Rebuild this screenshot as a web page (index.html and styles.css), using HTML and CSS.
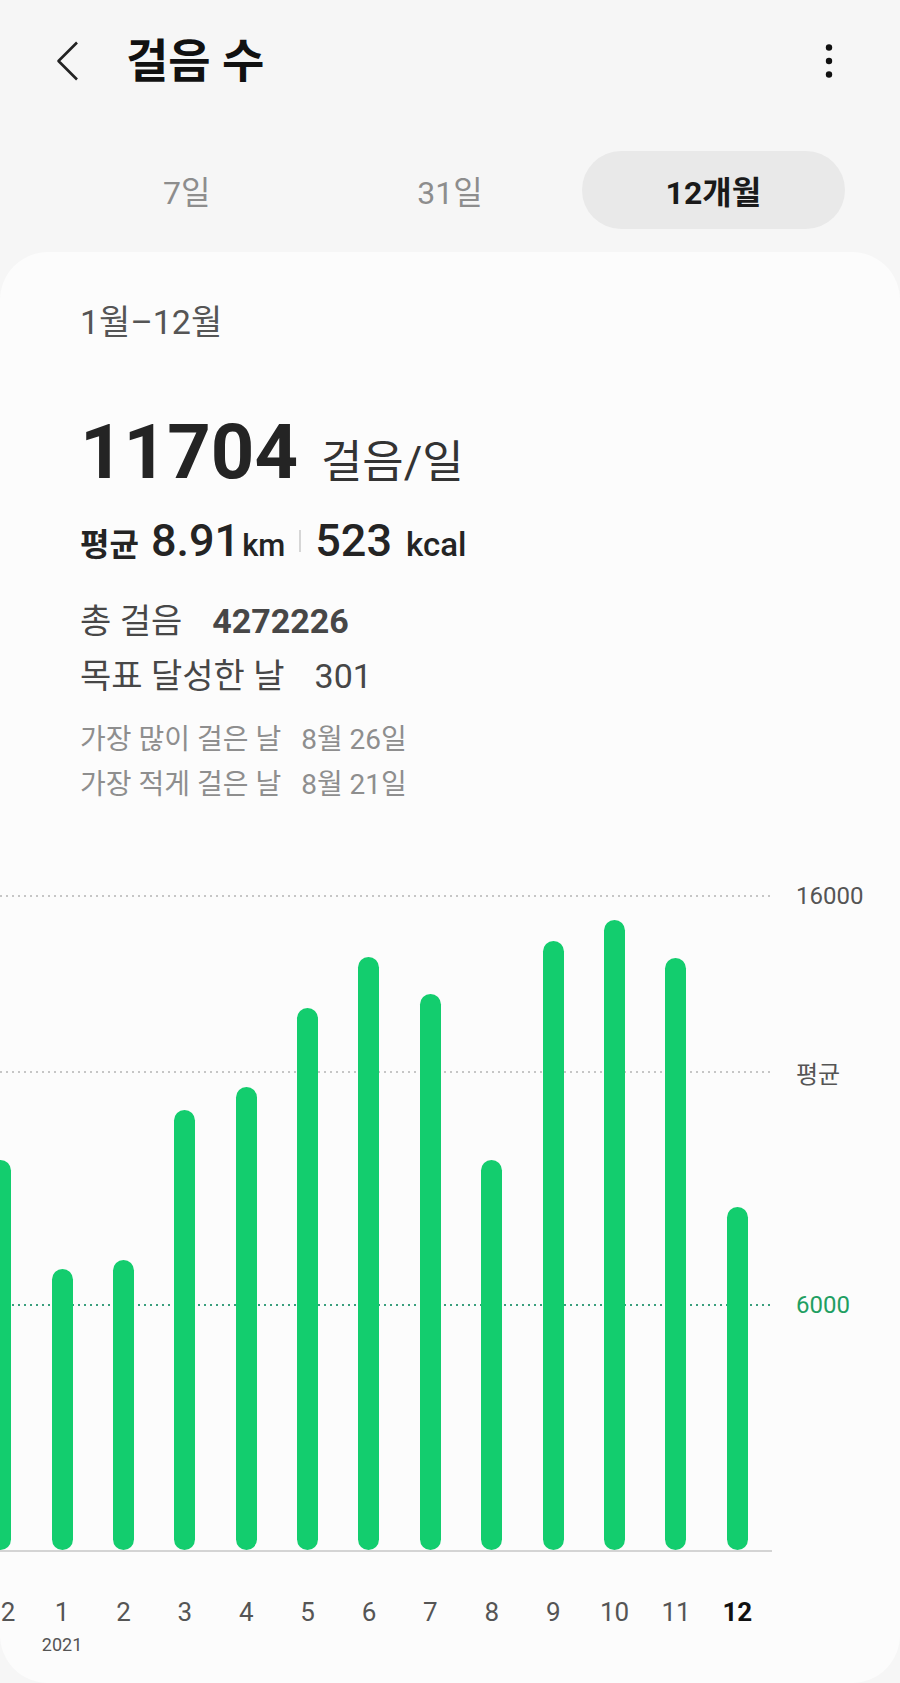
FILE: index.html
```html
<!DOCTYPE html>
<html lang="ko">
	<head>
		<meta charset="UTF-8" />
		<meta name="viewport" content="width=device-width, initial-scale=1.0" />
		<title>걸음 수</title>
		<link rel="stylesheet" href="styles.css">
	</head>
	<body>
		<header class="app-bar">
			<svg class="back-icon" width="28" height="40" viewBox="0 0 28 40">
				<path d="M21 1.5 L2.5 20 L21 38.5" fill="none" stroke="#222" stroke-width="2.6" stroke-linejoin="round" />
			</svg>
			<h1 class="title">걸음 수</h1>
			<svg class="more-icon" width="12" height="40" viewBox="0 0 12 40">
				<circle cx="6" cy="6.5" r="3.2" fill="#111" />
				<circle cx="6" cy="20" r="3.2" fill="#111" />
				<circle cx="6" cy="33.5" r="3.2" fill="#111" />
			</svg>
		</header>

		<nav class="tabs">
			<div class="tab">7일</div>
			<div class="tab">31일</div>
			<div class="tab active">12개월</div>
		</nav>

		<main class="card">
			<div class="summary">
				<div class="range">1월–12월</div>
				<div class="steps">
					<span class="steps-num">11704</span>
					<span class="steps-unit">걸음/일</span>
				</div>
				<div class="stats">
					<span class="stats-label">평균</span>
					<span class="stats-num">8.91</span><span class="stats-unit">km</span>
					<span class="divider"></span>
					<span class="stats-num">523</span>
					<span class="stats-unit kcal">kcal</span>
				</div>
				<div class="totals">
					<div class="total-row">총 걸음<span class="total-value strong">4272226</span></div>
					<div class="total-row">목표 달성한 날<span class="total-value">301</span></div>
				</div>
				<div class="records">
					<div class="record-row">가장 많이 걸은 날<span class="record-date">8월 26일</span></div>
					<div class="record-row">가장 적게 걸은 날<span class="record-date">8월 21일</span></div>
				</div>
			</div>

			<div class="chart">
				<div class="plot">
					<div class="grid grid-max">
						<span class="dots"></span>
						<span class="grid-label">16000</span>
					</div>
					<div class="grid grid-avg">
						<span class="dots"></span>
						<span class="grid-label">평균</span>
					</div>
					<div class="grid grid-goal">
						<span class="dots"></span>
						<span class="grid-label">6000</span>
					</div>

					<div class="bars">
						<div class="bar" style="height: 390px"></div>
						<div class="bar" style="height: 281px"></div>
						<div class="bar" style="height: 290px"></div>
						<div class="bar" style="height: 440px"></div>
						<div class="bar" style="height: 463px"></div>
						<div class="bar" style="height: 542px"></div>
						<div class="bar" style="height: 593px"></div>
						<div class="bar" style="height: 556px"></div>
						<div class="bar" style="height: 390px"></div>
						<div class="bar" style="height: 609px"></div>
						<div class="bar" style="height: 630px"></div>
						<div class="bar" style="height: 592px"></div>
						<div class="bar" style="height: 343px"></div>
					</div>
				</div>

				<div class="months">
					<div class="month">12</div>
					<div class="month">1<span class="year">2021</span></div>
					<div class="month">2</div>
					<div class="month">3</div>
					<div class="month">4</div>
					<div class="month">5</div>
					<div class="month">6</div>
					<div class="month">7</div>
					<div class="month">8</div>
					<div class="month">9</div>
					<div class="month">10</div>
					<div class="month">11</div>
					<div class="month current">12</div>
				</div>
			</div>
		</main>
	</body>
</html>
```

FILE: styles.css
```css
html,
body {
	height: 1683px;
	overflow: hidden;
}
body {
	margin: 0;
	background-color: #f6f6f6;
	font-family: Roboto, 'Noto Sans CJK KR', sans-serif;
	color: #222;
}
.app-bar {
	display: flex;
	align-items: center;
	height: 122px;
	padding: 0 65px 0 56px;
}
.title {
	margin: 0 0 0 42px;
	font-size: 46px;
	line-height: 46px;
	font-weight: 700;
	color: #111;
}
.more-icon {
	margin-left: auto;
}
.tabs {
	display: grid;
	grid-template-columns: repeat(3, 1fr);
	margin: 29px 55px 0;
	height: 78px;
}
.tab {
	display: flex;
	align-items: center;
	justify-content: center;
	font-size: 32px;
	color: #8d8d8d;
}
.tab.active {
	background-color: #e9e9e9;
	border-radius: 39px;
	color: #1a1a1a;
	font-weight: 700;
}
.card {
	display: block;
	margin-top: 23px;
	height: 1431px;
	background: #fcfcfc;
	border-radius: 48px;
	overflow: hidden;
}
.summary {
	padding: 50px 0 0 80px;
}
.range {
	font-size: 34px;
	line-height: 40px;
	color: #555;
}
.steps {
	margin-top: 65px;
	font-size: 76px;
	line-height: 90px;
	color: #242424;
	white-space: nowrap;
}
.steps-num {
	font-weight: 700;
	line-height: 1;
}
.steps-unit {
	margin-left: 4px;
	font-size: 45px;
	line-height: 1;
	color: #333;
}
.stats {
	display: flex;
	align-items: baseline;
	margin-top: 21px;
	font-size: 45px;
	line-height: 50px;
	color: #242424;
}
.stats span {
	line-height: 1;
}
.stats-label {
	margin-right: 12px;
	font-size: 32px;
	font-weight: 700;
}
.stats-num {
	font-weight: 500;
}
.stats-unit {
	margin-left: 2px;
	font-size: 31px;
	font-weight: 500;
}
.stats-unit.kcal {
	margin-left: 14px;
	font-size: 33px;
}
.divider {
	align-self: center;
	width: 2px;
	height: 22px;
	margin: 0 14px;
	background-color: #d6d6d6;
}
.totals {
	margin-top: 31px;
	font-size: 34px;
	line-height: 55px;
	color: #474747;
}
.total-value {
	margin-left: 30px;
}
.total-value.strong {
	font-weight: 700;
}
.records {
	margin-top: 13px;
	font-size: 28px;
	line-height: 45px;
	color: #8e8e8e;
}
.record-date {
	margin-left: 20px;
}
.chart {
	margin-top: 83px;
}
.plot {
	position: relative;
	width: 772px;
	height: 660px;
	border-bottom: 2px solid #d4d4d4;
}
.grid {
	position: absolute;
	left: 0;
	display: flex;
	align-items: center;
	height: 0;
}
.grid-max {
	bottom: 654px;
}
.grid-avg {
	bottom: 478px;
}
.grid-goal {
	bottom: 245px;
}
.dots {
	width: 770px;
	height: 2px;
	background: repeating-linear-gradient(to right, #c6c6c6 0 2px, transparent 2px 6px);
}
.grid-label {
	margin-left: 26px;
	font-size: 24px;
	color: #555;
	white-space: nowrap;
}
.grid-goal .dots {
	background: repeating-linear-gradient(to right, #3a9f7d 0 2px, transparent 2px 6px);
}
.grid-goal .grid-label {
	color: #1f9f62;
}
.bars {
	position: relative;
	display: flex;
	align-items: flex-end;
	height: 100%;
	margin-left: -30px;
}
.bar {
	flex: none;
	width: 21px;
	margin: 0 20.2px;
	border-radius: 11px;
	background-color: #13cd6e;
}
.months {
	display: flex;
	margin: 43px 0 0 -30px;
}
.month {
	flex: none;
	width: 61.4px;
	text-align: center;
	font-size: 26px;
	line-height: 34px;
	color: #555;
}
.month.current {
	color: #111;
	font-weight: 700;
}
.year {
	display: block;
	margin-top: 4px;
	font-size: 18px;
	line-height: 24px;
}
```
